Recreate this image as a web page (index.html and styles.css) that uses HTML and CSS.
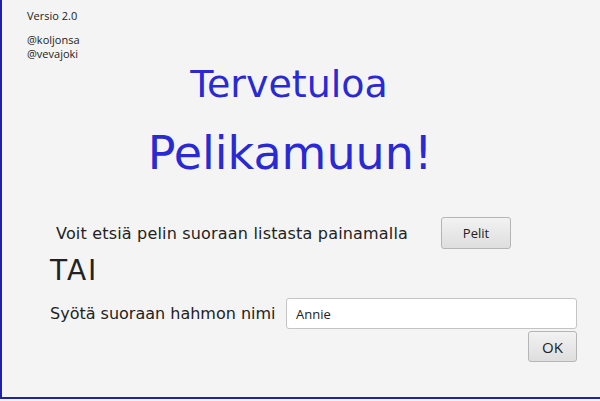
FILE: index.html
```html
<!DOCTYPE html>
<html lang="fi">
<head>
<meta charset="utf-8">
<link rel="stylesheet" href="styles.css">
</head>
<body>
<div class="frame">
  <div class="credits">
    <div class="version">Versio 2.0</div>
    <div class="authors">@koljonsa<br>@vevajoki</div>
  </div>
  <h1 class="title1">Tervetuloa</h1>
  <h2 class="title2">Pelikamuun!</h2>
  <div class="row-list">
    <span class="label list-label">Voit etsiä pelin suoraan listasta painamalla</span>
    <button class="btn btn-pelit">Pelit</button>
  </div>
  <div class="tai">TAI</div>
  <div class="row-input">
    <span class="label">Syötä suoraan hahmon nimi</span>
    <input class="name" type="text" value="Annie">
  </div>
  <div class="row-ok">
    <button class="btn btn-ok">OK</button>
  </div>
</div>
</body>
</html>
```
FILE: styles.css
```css
html, body {
  margin: 0;
  padding: 0;
  background: #f4f4f4;
}
.frame {
  box-sizing: border-box;
  width: 600px;
  height: 399px;
  border-left: 2px solid #2020a8;
  border-bottom: 2px solid #2020a8;
  box-shadow: 0 2px 0 #5a5a86;
  padding: 9px 0 0 25px;
  font-family: "Open Sans", "Noto Sans", sans-serif;
}
.credits {
  font-size: 11px;
  color: #222;
  line-height: 14px;
}
.authors {
  margin-top: 10px;
}
.title1, .title2 {
  margin: 0;
  font-family: "DejaVu Sans", sans-serif;
  font-weight: normal;
  color: #2a2ad2;
  text-align: center;
  width: 570px;
}
.title1 {
  font-size: 38px;
  line-height: 44px;
  margin-top: 1px;
  margin-left: -23px;
}
.title2 {
  font-size: 46px;
  line-height: 56px;
  margin-top: 19px;
  margin-left: -22px;
}
.label {
  font-family: "DejaVu Sans", sans-serif;
  font-size: 16px;
  color: #222;
}
.row-list {
  display: flex;
  align-items: center;
  margin-top: 36px;
  padding-left: 29px;
}
.list-label {
  width: 385px;
  letter-spacing: 0.18px;
}
.btn {
  font-family: "Open Sans", "Noto Sans", sans-serif;
  font-size: 13px;
  color: #222;
  border: 1px solid #b5b5b5;
  border-radius: 3px;
  background: linear-gradient(#f2f2f2, #dedede);
  padding: 0;
}
.btn-pelit {
  width: 70px;
  height: 32px;
}
.tai {
  font-family: "DejaVu Sans", sans-serif;
  font-size: 28px;
  letter-spacing: 2px;
  color: #222;
  margin-top: 6px;
  padding-left: 23px;
  line-height: 32px;
}
.row-input {
  display: flex;
  align-items: center;
  margin-top: 11px;
  padding-left: 23px;
}
.row-input .label {
  width: 236px;
}
.name {
  box-sizing: border-box;
  width: 291px;
  height: 31px;
  border: 1px solid #c4c4c4;
  border-radius: 3px;
  background: #fff;
  font-family: "Open Sans", "Noto Sans", sans-serif;
  font-size: 13px;
  color: #222;
  padding: 0 9px;
  outline: none;
}
.row-ok {
  display: flex;
  justify-content: flex-end;
  width: 550px;
  margin-top: 2px;
}
.btn-ok {
  width: 49px;
  height: 31px;
  font-size: 15px;
}
```
